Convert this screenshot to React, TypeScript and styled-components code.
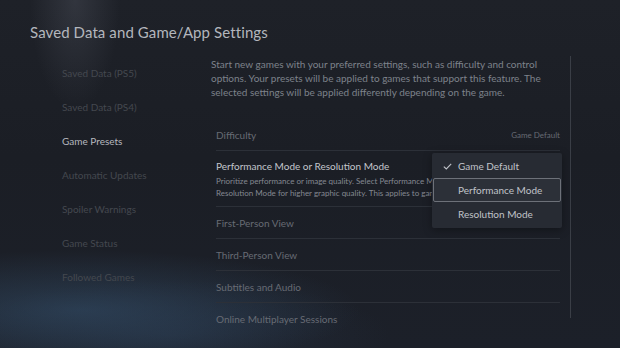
import React from "react";
import styled, { createGlobalStyle } from "styled-components";

const GlobalStyle = createGlobalStyle`
  html, body {
    margin: 0;
    padding: 0;
    background: #1b1e25;
  }
  * {
    box-sizing: border-box;
  }
`;

const Page = styled.div`
  width: 620px;
  height: 348px;
  overflow: hidden;
  padding: 22px 0 0 30px;
  font-family: Lato, "Open Sans", sans-serif;
  background:
    radial-gradient(ellipse 45px 110px at 75px 0px, rgba(120, 125, 140, 0.22), transparent),
    radial-gradient(ellipse 280px 60px at 80px 310px, rgba(55, 85, 115, 0.5), transparent),
    radial-gradient(ellipse 220px 55px at 170px 335px, rgba(45, 65, 90, 0.35), transparent),
    linear-gradient(180deg, #1e2128 0%, #1b1e25 45%, #1c2029 100%);
`;

const Title = styled.h1`
  margin: 0;
  font-size: 15px;
  line-height: 20px;
  font-weight: 400;
  color: #b3b6bd;
  letter-spacing: 0.1px;
`;

const Body = styled.div`
  display: flex;
  margin-top: 14px;
`;

const Nav = styled.nav`
  width: 181px;
  padding-left: 32px;
  display: flex;
  flex-direction: column;
`;

const NavItem = styled.div<{ $active?: boolean }>`
  height: 34px;
  line-height: 34px;
  font-size: 10px;
  color: ${(p) => (p.$active ? "#b5b8bf" : "#44484f")};
  white-space: nowrap;
`;

const Content = styled.div`
  width: 360px;
  height: 262px;
  border-right: 1px solid #3a3e46;
  padding-top: 1px;
`;

const Description = styled.p`
  margin: 0;
  width: 350px;
  font-size: 10px;
  line-height: 14px;
  color: #7d828b;
`;

const List = styled.div`
  margin: 20px 0 0 5px;
  width: 344px;
`;

const Row = styled.div<{ $tall?: boolean }>`
  position: relative;
  height: ${(p) => (p.$tall ? 56 : 32)}px;
  border-bottom: 1px solid #2c3038;
  display: flex;
  flex-direction: column;
  justify-content: ${(p) => (p.$tall ? "flex-start" : "center")};
  padding-top: ${(p) => (p.$tall ? 7 : 0)}px;
  &:last-child {
    border-bottom: none;
  }
`;

const RowHead = styled.div`
  display: flex;
  align-items: center;
  justify-content: space-between;
`;

const RowLabel = styled.span<{ $bright?: boolean }>`
  font-size: 10px;
  line-height: 16px;
  color: ${(p) => (p.$bright ? "#c3c6cc" : "#676b74")};
  white-space: nowrap;
`;

const RowValue = styled.span`
  font-size: 8px;
  color: #676b74;
`;

const RowHint = styled.div`
  width: 216px;
  margin-top: 1px;
  font-size: 8px;
  line-height: 12px;
  color: #858992;
  white-space: nowrap;
  overflow: hidden;
`;

const Dropdown = styled.div`
  position: absolute;
  top: 2px;
  right: -2px;
  width: 130px;
  height: 75px;
  background: #272b33;
  border-radius: 2px;
  padding-top: 1px;
  box-shadow: 0 2px 8px rgba(0, 0, 0, 0.35);
`;

const Option = styled.div<{ $focused?: boolean }>`
  position: relative;
  height: 24px;
  margin: 0 1px;
  display: flex;
  align-items: center;
  padding-left: 24px;
  font-size: 10px;
  color: #c0c3c9;
  border: 1px solid ${(p) => (p.$focused ? "#6d7179" : "transparent")};
  border-radius: 2px;
  background: ${(p) => (p.$focused ? "#2c3038" : "transparent")};
`;

const Check = styled.svg`
  position: absolute;
  left: 9px;
  top: 8px;
`;

const rows = [
  "First-Person View",
  "Third-Person View",
  "Subtitles and Audio",
  "Online Multiplayer Sessions",
];

const navItems = [
  "Saved Data (PS5)",
  "Saved Data (PS4)",
  "Game Presets",
  "Automatic Updates",
  "Spoiler Warnings",
  "Game Status",
  "Followed Games",
];

export default function App() {
  return (
    <Page>
      <GlobalStyle />
      <Title>Saved Data and Game/App Settings</Title>
      <Body>
        <Nav>
          {navItems.map((item) => (
            <NavItem key={item} $active={item === "Game Presets"}>
              {item}
            </NavItem>
          ))}
        </Nav>
        <Content>
          <Description>
            Start new games with your preferred settings, such as difficulty and control
            options. Your presets will be applied to games that support this feature. The
            selected settings will be applied differently depending on the game.
          </Description>
          <List>
            <Row>
              <RowHead>
                <RowLabel>Difficulty</RowLabel>
                <RowValue>Game Default</RowValue>
              </RowHead>
            </Row>
            <Row $tall>
              <RowLabel $bright>Performance Mode or Resolution Mode</RowLabel>
              <RowHint>
                Prioritize performance or image quality. Select Performance Mode for
                higher frame rates or
                <br />
                Resolution Mode for higher graphic quality. This applies to games that
                support it.
              </RowHint>
              <Dropdown>
                <Option>
                  <Check width="9" height="7" viewBox="0 0 9 7">
                    <path d="M0.8 3.6 L3.3 6 L8.2 0.8" fill="none" stroke="#c0c3c9" strokeWidth="1.1" />
                  </Check>
                  Game Default
                </Option>
                <Option $focused>Performance Mode</Option>
                <Option>Resolution Mode</Option>
              </Dropdown>
            </Row>
            {rows.map((r) => (
              <Row key={r}>
                <RowLabel>{r}</RowLabel>
              </Row>
            ))}
          </List>
        </Content>
      </Body>
    </Page>
  );
}
